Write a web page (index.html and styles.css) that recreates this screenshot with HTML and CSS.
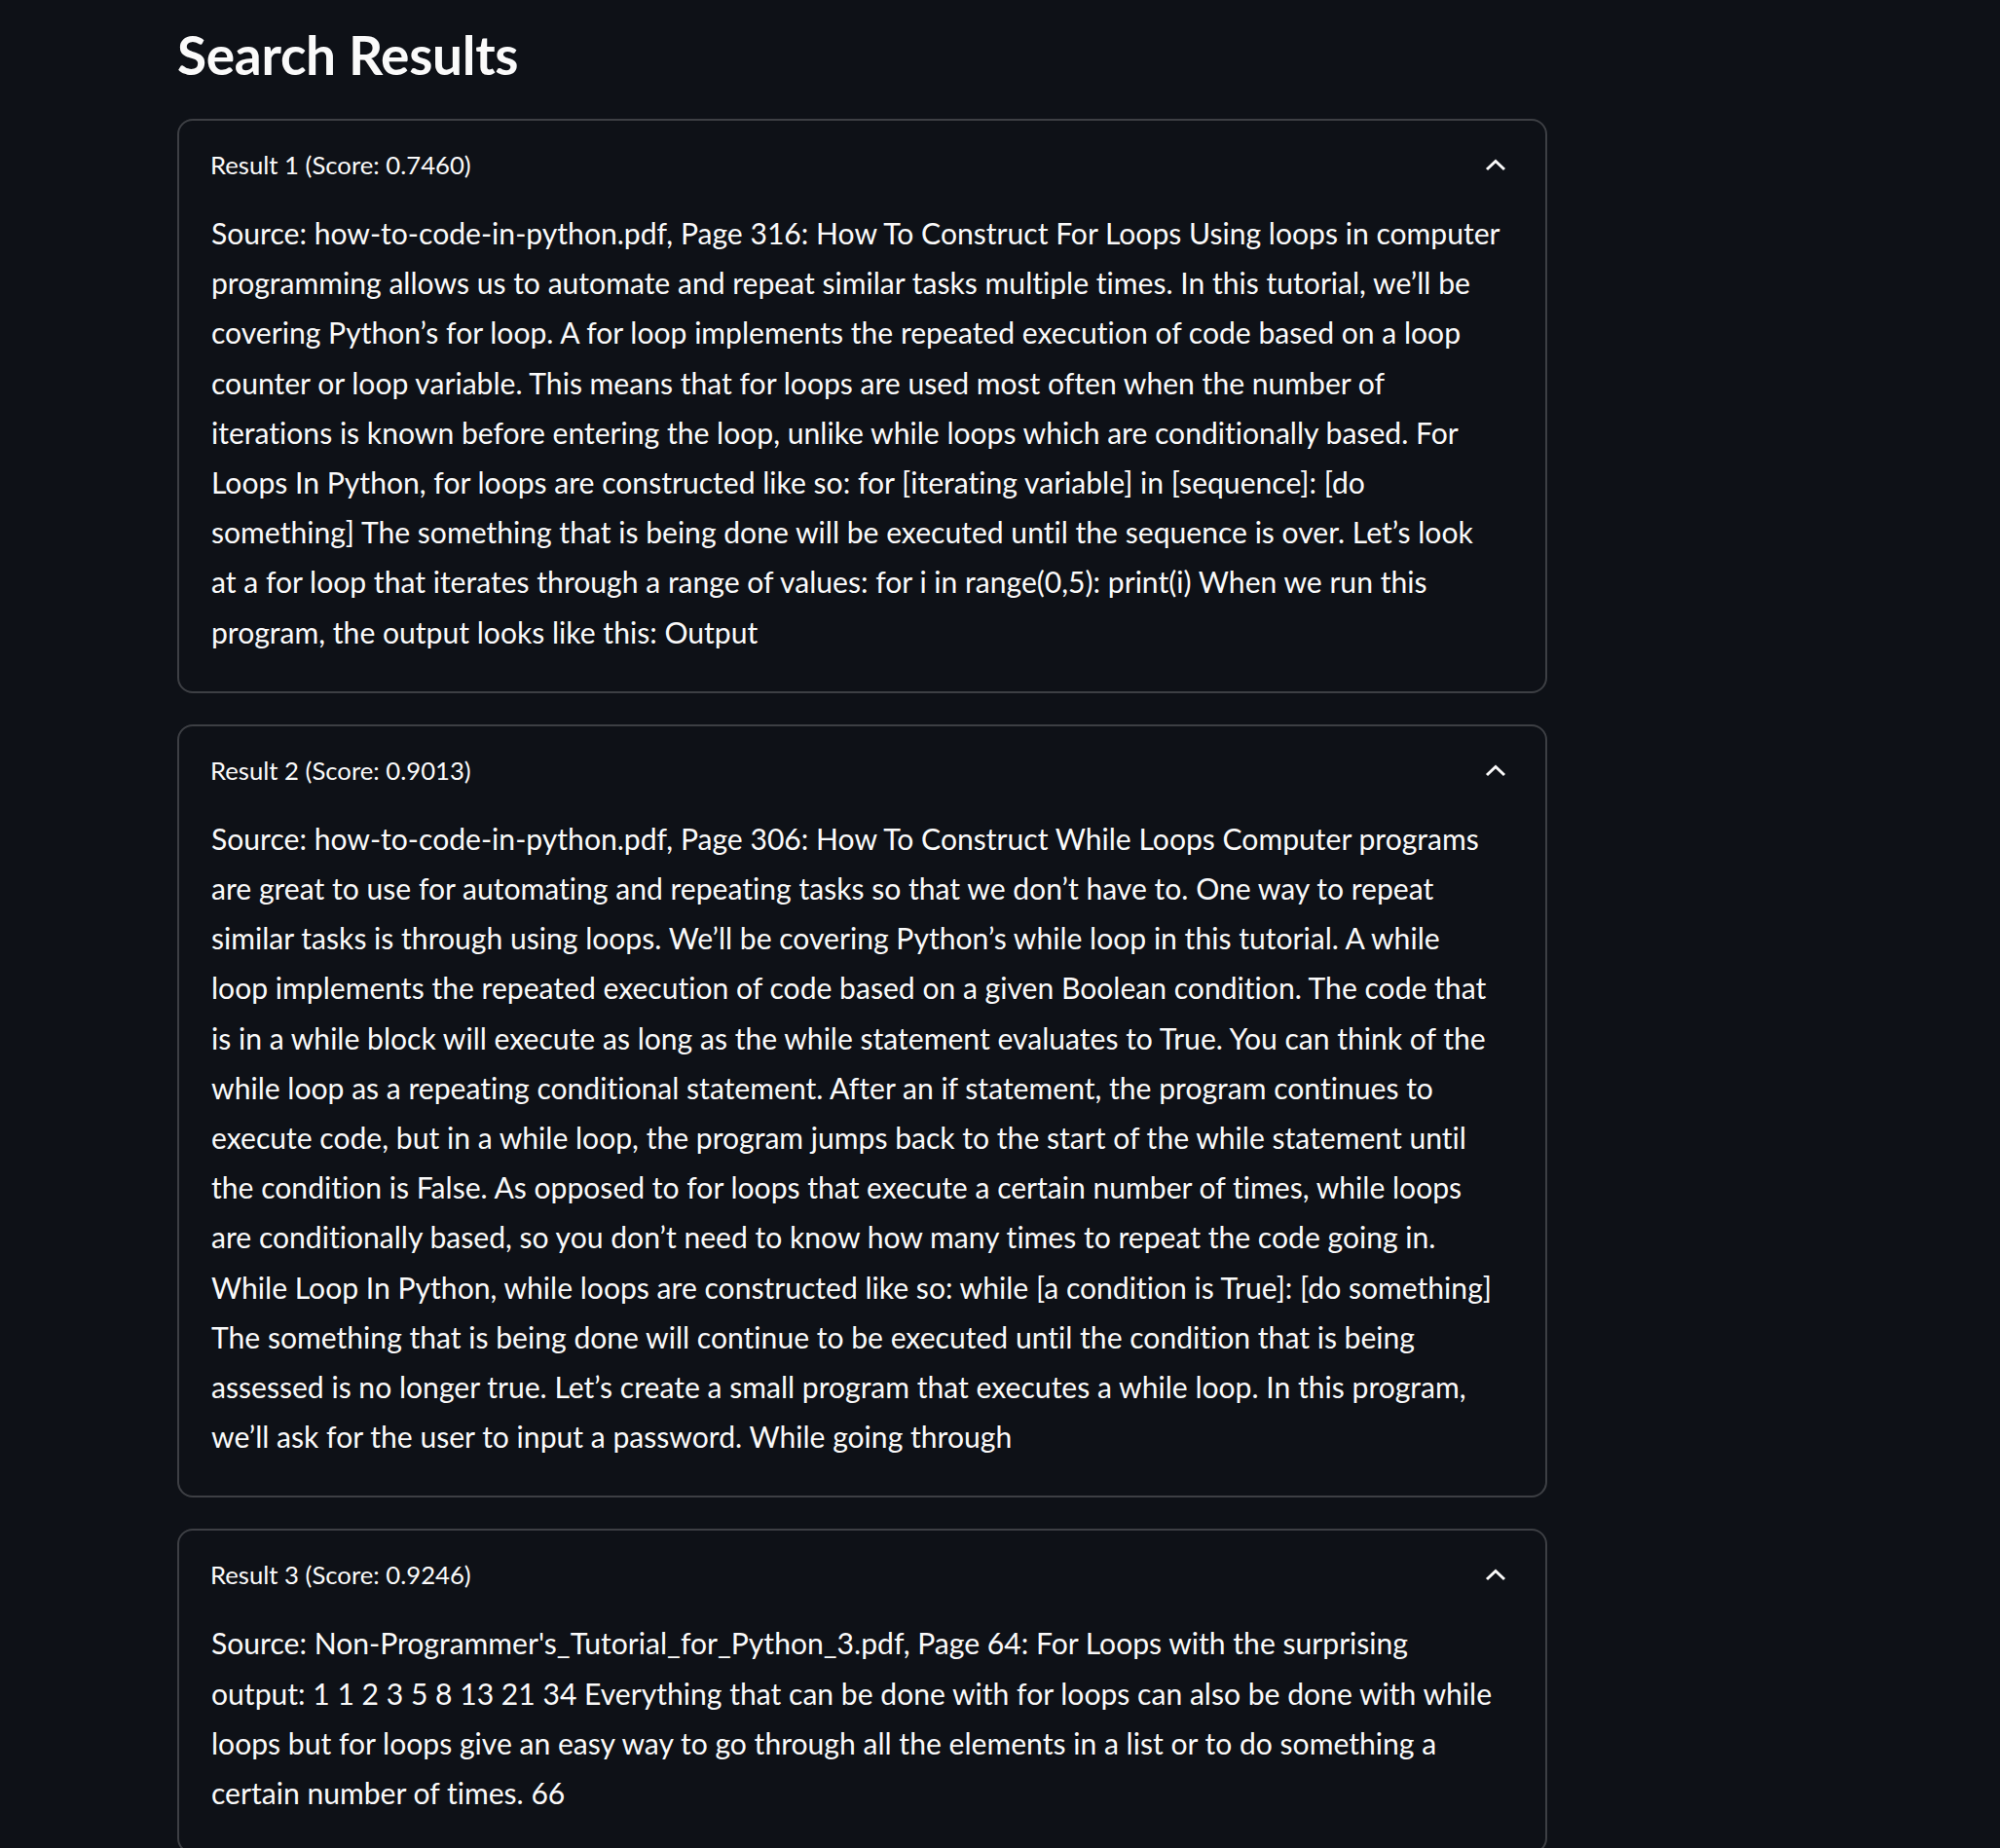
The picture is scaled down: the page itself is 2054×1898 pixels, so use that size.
FILE: index.html
```html
<!DOCTYPE html>
<html lang="en">
<head>
<meta charset="utf-8">
<title>Search Results</title>
<link rel="stylesheet" href="styles.css">
</head>
<body>
<main class="main">
  <h2 class="title">Search Results</h2>
  <div class="results">
    <details class="expander" open>
      <summary class="summary"><span class="label">Result 1 (Score: 0.7460)</span>
        <svg class="chev" width="22" height="14" viewBox="0 0 22 14"><polyline points="2,12 11,3.5 20,12" fill="none" stroke="#fafafa" stroke-width="3"/></svg>
      </summary>
      <div class="body">
        <p>Source: how-to-code-in-python.pdf, Page 316: How To Construct For Loops Using loops in computer<br>
programming allows us to automate and repeat similar tasks multiple times. In this tutorial, we’ll be<br>
covering Python’s for loop. A for loop implements the repeated execution of code based on a loop<br>
counter or loop variable. This means that for loops are used most often when the number of<br>
iterations is known before entering the loop, unlike while loops which are conditionally based. For<br>
Loops In Python, for loops are constructed like so: for [iterating variable] in [sequence]: [do<br>
something] The something that is being done will be executed until the sequence is over. Let’s look<br>
at a for loop that iterates through a range of values: for i in range(0,5): print(i) When we run this<br>
program, the output looks like this: Output</p>
      </div>
    </details>
    <details class="expander" open>
      <summary class="summary"><span class="label">Result 2 (Score: 0.9013)</span>
        <svg class="chev" width="22" height="14" viewBox="0 0 22 14"><polyline points="2,12 11,3.5 20,12" fill="none" stroke="#fafafa" stroke-width="3"/></svg>
      </summary>
      <div class="body">
        <p>Source: how-to-code-in-python.pdf, Page 306: How To Construct While Loops Computer programs<br>
are great to use for automating and repeating tasks so that we don’t have to. One way to repeat<br>
similar tasks is through using loops. We’ll be covering Python’s while loop in this tutorial. A while<br>
loop implements the repeated execution of code based on a given Boolean condition. The code that<br>
is in a while block will execute as long as the while statement evaluates to True. You can think of the<br>
while loop as a repeating conditional statement. After an if statement, the program continues to<br>
execute code, but in a while loop, the program jumps back to the start of the while statement until<br>
the condition is False. As opposed to for loops that execute a certain number of times, while loops<br>
are conditionally based, so you don’t need to know how many times to repeat the code going in.<br>
While Loop In Python, while loops are constructed like so: while [a condition is True]: [do something]<br>
The something that is being done will continue to be executed until the condition that is being<br>
assessed is no longer true. Let’s create a small program that executes a while loop. In this program,<br>
we’ll ask for the user to input a password. While going through</p>
      </div>
    </details>
    <details class="expander" open>
      <summary class="summary"><span class="label">Result 3 (Score: 0.9246)</span>
        <svg class="chev" width="22" height="14" viewBox="0 0 22 14"><polyline points="2,12 11,3.5 20,12" fill="none" stroke="#fafafa" stroke-width="3"/></svg>
      </summary>
      <div class="body">
        <p>Source: Non-Programmer's_Tutorial_for_Python_3.pdf, Page 64: For Loops with the surprising<br>
output: 1 1 2 3 5 8 13 21 34 Everything that can be done with for loops can also be done with while<br>
loops but for loops give an easy way to go through all the elements in a list or to do something a<br>
certain number of times. 66</p>
      </div>
    </details>
  </div>
</main>
</body>
</html>
```
FILE: styles.css
```css
html, body {
  margin: 0;
  padding: 0;
  background: #0e1117;
  color: #fafafa;
  font-family: Lato, "Open Sans", sans-serif;
  font-variant-ligatures: no-common-ligatures;
}
.main {
  width: 1407px;
  padding-left: 182px;
  padding-top: 16px;
}
.title {
  margin: 0;
  font-size: 55px;
  font-weight: 700;
  line-height: 80px;
  letter-spacing: -0.3px;
}
.results {
  margin-top: 26px;
  display: flex;
  flex-direction: column;
  gap: 32px;
}
.expander {
  border: 2px solid rgba(250, 250, 250, 0.2);
  border-radius: 16px;
}
.summary {
  list-style: none;
  display: flex;
  align-items: center;
  justify-content: space-between;
  padding: 23px 40px 23px 32px;
  cursor: pointer;
}
.summary::-webkit-details-marker { display: none; }
.label {
  font-size: 25.7px;
  line-height: 44px;
}
.chev { display: block; }
.body {
  padding: 0 28px 35px 33px;
}
.body p {
  margin: 0;
  font-size: 30.1px;
  line-height: 51.2px;
}
```
